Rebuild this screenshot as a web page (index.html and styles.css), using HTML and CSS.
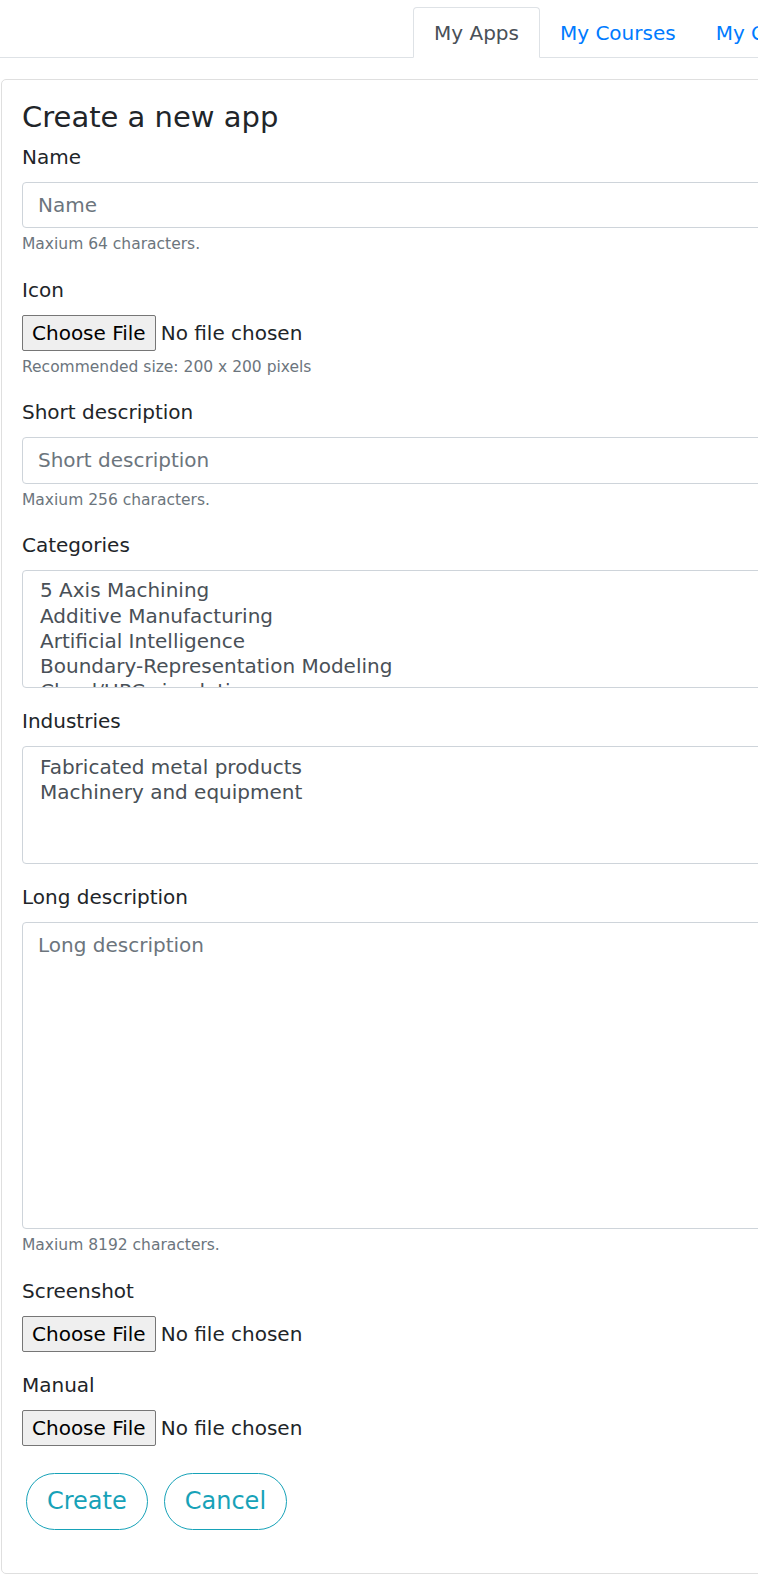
FILE: index.html
```html
<!DOCTYPE html>
<html lang="en">
<head>
<meta charset="utf-8">
<title>Create a new app</title>
<link rel="stylesheet" href="styles.css">
</head>
<body>
<div class="page">
  <nav class="tabs">
    <a class="tab active" href="#">My Apps</a>
    <a class="tab" href="#">My Courses</a>
    <a class="tab" href="#">My Comments</a>
  </nav>

  <section class="card">
    <h3 class="title">Create a new app</h3>
    <form class="form">
      <div class="group">
        <label class="label" for="name">Name</label>
        <input class="control" id="name" type="text" placeholder="Name">
        <small class="hint">Maxium 64 characters.</small>
      </div>

      <div class="group">
        <label class="label" for="icon">Icon</label>
        <input class="file" id="icon" type="file">
        <small class="hint">Recommended size: 200 x 200 pixels</small>
      </div>

      <div class="group">
        <label class="label" for="short">Short description</label>
        <input class="control" id="short" type="text" placeholder="Short description">
        <small class="hint">Maxium 256 characters.</small>
      </div>

      <div class="group">
        <label class="label" for="cats">Categories</label>
        <select class="control listbox" id="cats" multiple>
          <option>5 Axis Machining</option>
          <option>Additive Manufacturing</option>
          <option>Artificial Intelligence</option>
          <option>Boundary-Representation Modeling</option>
          <option>Cloud/HPC simulation</option>
          <option>Computational Fluid Dynamics</option>
          <option>Finite Element Analysis</option>
        </select>
      </div>

      <div class="group">
        <label class="label" for="inds">Industries</label>
        <select class="control listbox" id="inds" multiple>
          <option>Fabricated metal products</option>
          <option>Machinery and equipment</option>
        </select>
      </div>

      <div class="group">
        <label class="label" for="long">Long description</label>
        <textarea class="control area" id="long" placeholder="Long description"></textarea>
        <small class="hint">Maxium 8192 characters.</small>
      </div>

      <div class="group">
        <label class="label" for="shot">Screenshot</label>
        <input class="file" id="shot" type="file">
      </div>

      <div class="group">
        <label class="label" for="manual">Manual</label>
        <input class="file" id="manual" type="file">
      </div>

      <div class="actions">
        <button class="pill" type="submit">Create</button>
        <button class="pill" type="button">Cancel</button>
      </div>
    </form>
  </section>
</div>
</body>
</html>
```

FILE: styles.css
```css
html, body {
  margin: 0;
  padding: 0;
  overflow: hidden;
  background: #fff;
}

body {
  font-family: "DejaVu Sans", "Noto Sans", sans-serif;
  color: #212529;
  font-size: 20px;
  line-height: 1.5;
}

.page {
  width: 1100px;
}

.tabs {
  display: flex;
  padding: 7px 0 0 413px;
  border-bottom: 1px solid #dee2e6;
}

.tab {
  display: block;
  padding: 9.5px 20px;
  margin-bottom: -1px;
  border: 1px solid transparent;
  border-top-left-radius: 4px;
  border-top-right-radius: 4px;
  color: #007bff;
  text-decoration: none;
  font-size: 20px;
  line-height: 30px;
}

.tab.active {
  color: #495057;
  background: #fff;
  border-color: #dee2e6 #dee2e6 #fff;
}

.tab + .tab {
  padding-left: 19px;
  padding-right: 19px;
}

.card {
  margin: 21px 0 0 1px;
  border: 1px solid #dfdfdf;
  border-radius: 5px;
  padding: 20px 20px 22px;
}

.title {
  margin: 0 0 8px;
  font-size: 29px;
  font-weight: 400;
  line-height: 34px;
}

.form {
  margin: 0;
}

.group {
  margin-bottom: 18.35px;
}

.label {
  display: block;
  margin-bottom: 10px;
  font-size: 20px;
  line-height: 30px;
}

.control {
  display: block;
  box-sizing: border-box;
  width: 100%;
  height: 46.3px;
  padding: 7px 15px;
  border: 1px solid #ced4da;
  border-radius: 4px;
  font-family: inherit;
  font-size: 20px;
  line-height: 30px;
  color: #495057;
  background: #fff;
  margin: 0;
}

.control::placeholder {
  color: #6c757d;
  opacity: 1;
}

.listbox {
  height: 117.8px;
  padding: 7.5px 15px 6px;
  overflow: hidden;
}

.listbox option {
  padding: 0 2px 1.2px;
  color: #495057;
}

.area {
  height: 307px;
  resize: none;
}

.hint {
  display: block;
  margin-top: 5px;
  font-size: 15.5px;
  line-height: 23px;
  color: #6c757d;
}

.file {
  display: block;
  font-family: inherit;
  font-size: 20px;
  color: #212529;
  margin: 0;
  padding: 0;
  height: 36.3px;
}

.file::file-selector-button {
  font-family: inherit;
  font-size: 20px;
  height: 36.3px;
  padding: 0 9px;
  margin-right: 5px;
  border: 1px solid #767676;
  border-radius: 2px;
  background: #efefef;
  color: #000;
}

.actions {
  display: flex;
  gap: 16px;
  padding: 8px 0 0 4px;
  margin-bottom: 21px;
}

.pill {
  padding: 9.5px 20px;
  border: 1px solid #17a2b8;
  border-radius: 29px;
  background: #fff;
  color: #17a2b8;
  font-family: inherit;
  font-size: 24px;
  line-height: 36px;
}
```
